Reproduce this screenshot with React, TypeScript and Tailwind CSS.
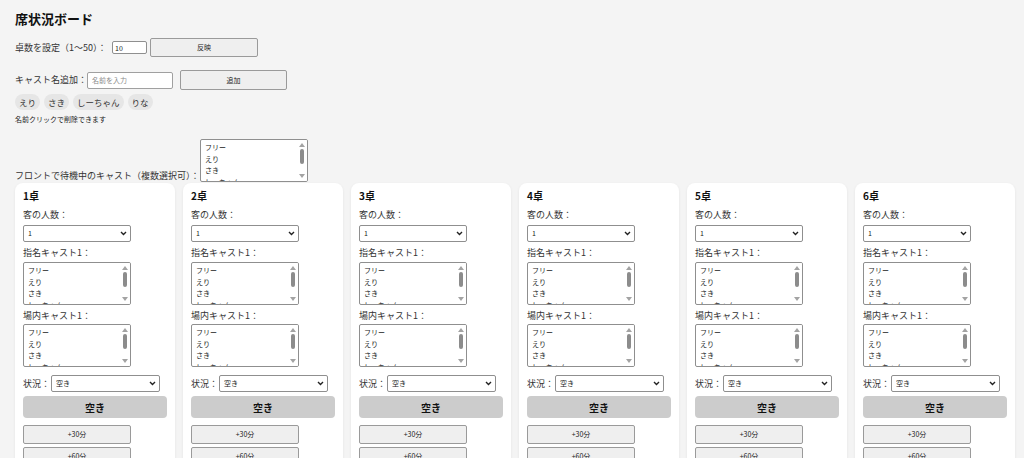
import React from "react";

const CASTS = ["えり", "さき", "しーちゃん", "りな"];
const OPTIONS = ["フリー", ...CASTS];

function Chevron() {
  return (
    <svg
      className="pointer-events-none absolute right-[4px] top-[6px]"
      width="7"
      height="5"
      viewBox="0 0 7 5"
    >
      <path d="M1 1 L3.5 3.5 L6 1" fill="none" stroke="#222" strokeWidth="1.4" />
    </svg>
  );
}

function Select({ value, w }: { value: string; w: string }) {
  return (
    <div className={`relative ${w} h-[17px] shrink-0`}>
      <select
        defaultValue={value}
        className="block h-full w-full appearance-none rounded-[2px] border border-[#8f8f8f] bg-white pl-[4px] text-[7px] leading-[15px] text-[#222] outline-none"
      >
        <option>{value}</option>
      </select>
      <Chevron />
    </div>
  );
}

function ListBox() {
  return (
    <div className="relative h-[43px] w-[108px] shrink-0 overflow-hidden rounded-[2px] border border-[#8f8f8f] bg-white">
      <div className="pl-[4px] pt-[2px]">
        {OPTIONS.map((o) => (
          <div key={o} className="h-[11.5px] text-[7px] leading-[11.5px] text-[#222]">
            {o}
          </div>
        ))}
      </div>
      <div className="absolute right-0 top-0 h-full w-[10px] bg-white">
        <div className="absolute left-[2px] top-[3px] h-0 w-0 border-x-[3px] border-b-[4px] border-x-transparent border-b-[#a3a3a3]" />
        <div className="absolute left-[3px] top-[9px] h-[15px] w-[4px] rounded-full bg-[#8c8c8c]" />
        <div className="absolute bottom-[3px] left-[2px] h-0 w-0 border-x-[3px] border-t-[4px] border-x-transparent border-t-[#a3a3a3]" />
      </div>
    </div>
  );
}

function Btn({ label, w, h }: { label: string; w: string; h: string }) {
  return (
    <button
      className={`block ${w} ${h} shrink-0 rounded-[2px] border border-[#9a9a9a] bg-[#efefef] text-[7px] text-[#222]`}
    >
      {label}
    </button>
  );
}

function Card({ n }: { n: number }) {
  return (
    <div className="flex w-[160px] flex-col rounded-[8px] bg-white px-[8px] pb-[8px] pt-[6px] shadow-[0_1px_3px_rgba(0,0,0,0.07)]">
      <h3 className="h-[14px] text-[10px] font-bold leading-[14px] text-[#111]">{n}卓</h3>
      <div className="mt-[5px] h-[14px] text-[9px] leading-[14px]">客の人数：</div>
      <div className="mt-[3px]">
        <Select value="1" w="w-[108px]" />
      </div>
      <div className="mt-[4px] h-[14px] text-[9px] leading-[14px]">指名キャスト1：</div>
      <div className="mt-[2px]">
        <ListBox />
      </div>
      <div className="mt-[4px] h-[14px] text-[9px] leading-[14px]">場内キャスト1：</div>
      <div className="mt-[1px]">
        <ListBox />
      </div>
      <div className="mt-[8px] flex items-center">
        <span className="w-[28px] text-[9px] leading-[14px]">状況：</span>
        <Select value="空き" w="w-[109px]" />
      </div>
      <button className="mt-[4px] block h-[22px] w-[144px] rounded-[4px] bg-[#cccccc] text-[10px] font-bold text-[#111]">
        空き
      </button>
      <div className="mt-[7px]">
        <Btn label="+30分" w="w-[108px]" h="h-[19px]" />
      </div>
      <div className="mt-[3px]">
        <Btn label="+60分" w="w-[108px]" h="h-[19px]" />
      </div>
    </div>
  );
}

export default function App() {
  return (
    <div
      className="min-h-[458px] bg-[#f4f4f4] pl-[15px] pr-[8px] pt-[10px] text-[#333]"
      style={{ fontFamily: '"Noto Sans CJK JP", "Noto Sans", sans-serif' }}
    >
      <h1 className="h-[18px] text-[13px] font-bold leading-[18px] text-[#111]">席状況ボード</h1>

      <div className="mt-[10px] flex h-[19px] items-center">
        <span className="w-[95px] shrink-0 whitespace-nowrap text-[9px] leading-[14px]">卓数を設定（1～50）：</span>
        <input
          defaultValue="10"
          className="ml-[2px] block h-[13px] w-[35px] rounded-[2px] border border-[#8f8f8f] bg-white pl-[2px] text-[7px] text-[#222] outline-none"
        />
        <div className="ml-[3px]">
          <Btn label="反映" w="w-[108px]" h="h-[19px]" />
        </div>
      </div>

      <div className="mt-[13px] flex h-[20px] items-center">
        <span className="w-[70px] shrink-0 whitespace-nowrap text-[9px] leading-[14px]">キャスト名追加：</span>
        <input
          placeholder="名前を入力"
          className="ml-[2px] block h-[17px] w-[86px] rounded-[2px] border border-[#a0a0a0] bg-white pl-[4px] text-[7px] text-[#222] outline-none placeholder:text-[#8a8a8a]"
        />
        <div className="ml-[7px]">
          <Btn label="追加" w="w-[107px]" h="h-[20px]" />
        </div>
      </div>

      <div className="mt-[4px] flex gap-[4px]">
        {CASTS.map((c) => (
          <span
            key={c}
            className="flex h-[16px] items-center rounded-[8px] bg-[#e6e6e6] px-[4px] text-[8.5px] text-[#333]"
          >
            {c}
          </span>
        ))}
      </div>

      <div className="mt-[4px] h-[10px] text-[7px] leading-[10px] text-[#222]">名前クリックで削除できます</div>

      <div className="mt-[15px] flex items-end">
        <span className="w-[185px] shrink-0 h-[12px] whitespace-nowrap text-[9px] leading-[12px]">フロントで待機中のキャスト（複数選択可）：</span>
        <ListBox />
      </div>

      <div className="mt-[1px] flex flex-wrap gap-[8px]">
        {Array.from({ length: 10 }, (_, i) => (
          <Card key={i} n={i + 1} />
        ))}
      </div>
    </div>
  );
}
